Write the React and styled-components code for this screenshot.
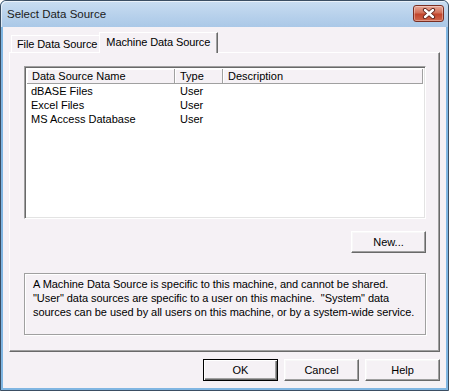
import React from "react";
import styled, { createGlobalStyle } from "styled-components";

const face = "#f5f1f5";
const shadow = "#a0a0a0";
const darkShadow = "#696969";

const GlobalStyle = createGlobalStyle`
  html, body {
    margin: 0;
    padding: 0;
    background: #ffffff;
  }
  body {
    font-family: "Liberation Sans", Arial, sans-serif;
    font-size: 11px;
    color: #000;
  }
`;

const Window = styled.div`
  width: 449px;
  height: 391px;
  box-sizing: border-box;
  border: 1px solid #3b4e63;
  border-radius: 6px 6px 0 0;
  background: #80b6e2;
  display: flex;
  flex-direction: column;
  overflow: hidden;
`;

const TitleBar = styled.div`
  height: 26px;
  flex: none;
  display: flex;
  justify-content: space-between;
  align-items: flex-start;
  background: linear-gradient(#c9ddf1, #b6d0eb 60%, #aac8e7);
  box-shadow: inset 1px 1px 0 rgba(255, 255, 255, 0.6);
  border-radius: 5px 5px 0 0;
`;

const Title = styled.span`
  font-size: 11.5px;
  line-height: 27px;
  padding-left: 6px;
  color: #1b1b1b;
`;

const CloseButton = styled.div`
  width: 29px;
  height: 15px;
  margin: 4px 4px 0 0;
  border: 1px solid #7a2e22;
  border-radius: 3px;
  background: linear-gradient(#e8a898, #d27058 45%, #c2452c 55%, #d0674d);
  box-shadow: inset 0 0 0 1px rgba(255, 255, 255, 0.35);
  display: flex;
  align-items: center;
  justify-content: center;
`;

const Client = styled.div`
  flex: 1;
  margin: 0 2px 2px 2px;
  background: ${face};
  padding: 5px 6px 0 6px;
  display: flex;
  flex-direction: column;
`;

const TabStrip = styled.div`
  height: 20px;
  display: flex;
  align-items: flex-end;
  padding-left: 2px;
  position: relative;
  z-index: 1;
`;

const Tab = styled.div`
  box-sizing: border-box;
  height: ${(p) => (p.$active ? "21px" : "17px")};
  margin-bottom: ${(p) => (p.$active ? "-1px" : "0")};
  margin-left: ${(p) => (p.$active ? "-2px" : "0")};
  padding: ${(p) => (p.$active ? "0 7px 0 6px" : "0 3px 0 5px")};
  line-height: ${(p) => (p.$active ? "18px" : "17px")};
  letter-spacing: -0.1px;
  background: ${face};
  border-top: 1px solid #ffffff;
  border-left: 1px solid #ffffff;
  border-right: 1px solid ${darkShadow};
  box-shadow: inset -1px 0 0 ${shadow};
  white-space: nowrap;
`;

const Panel = styled.div`
  height: 300px;
  box-sizing: border-box;
  border: 1px solid;
  border-color: #ffffff ${darkShadow} ${darkShadow} #ffffff;
  box-shadow: inset -1px -1px 0 ${shadow};
  padding: 13px 13px 0 14px;
  display: flex;
  flex-direction: column;
`;

const ListView = styled.div`
  height: 153px;
  box-sizing: border-box;
  border: 1px solid;
  border-color: ${shadow} #ffffff #ffffff ${shadow};
  box-shadow: inset 1px 1px 0 ${darkShadow}, inset -1px -1px 0 #e3e3e3;
  background: #ffffff;
  padding: 2px;
`;

const HeaderRow = styled.div`
  display: flex;
  height: 15px;
`;

const HeaderCell = styled.div`
  box-sizing: border-box;
  width: ${(p) => p.$w}px;
  flex: none;
  height: 15px;
  line-height: 14px;
  padding-left: 5px;
  background: ${face};
  border-right: 1px solid ${shadow};
  border-bottom: 1px solid ${shadow};
  box-shadow: inset 1px 1px 0 #ffffff;
  white-space: nowrap;
`;

const Row = styled.div`
  display: flex;
  height: 14px;
  line-height: 14px;
`;

const Cell = styled.div`
  width: ${(p) => p.$w}px;
  flex: none;
  box-sizing: border-box;
  padding-left: ${(p) => (p.$first ? "4px" : "5px")};
  white-space: nowrap;
`;

const ButtonRow = styled.div`
  display: flex;
  justify-content: flex-end;
  gap: 6px;
  margin-top: ${(p) => p.$top || 0}px;
`;

const Button = styled.div`
  width: 75px;
  height: 22px;
  box-sizing: border-box;
  border: 1px solid;
  border-color: #ffffff ${darkShadow} ${darkShadow} #ffffff;
  box-shadow: inset -1px -1px 0 ${shadow}, inset 1px 1px 0 #f8f8f8;
  background: ${face};
  display: flex;
  align-items: center;
  justify-content: center;
  ${(p) =>
    p.$default &&
    `
    border: 1px solid #000;
    box-shadow: inset 1px 1px 0 #ffffff, inset -1px -1px 0 ${darkShadow}, inset -2px -2px 0 ${shadow};
  `}
`;

const InfoBox = styled.div`
  margin-top: 20px;
  height: 62px;
  box-sizing: border-box;
  border: 1px solid ${shadow};
  box-shadow: 1px 1px 0 #ffffff, inset 1px 1px 0 #ffffff;
  padding: 3px 0 0 8px;
  line-height: 14px;
  letter-spacing: -0.05px;
  white-space: pre;
`;

const Footer = styled.div`
  padding-top: 7px;
`;

const columns = [148, 48, 200];

const rows = [
  ["dBASE Files", "User", ""],
  ["Excel Files", "User", ""],
  ["MS Access Database", "User", ""],
];

export default function App() {
  return (
    <>
      <GlobalStyle />
      <Window>
        <TitleBar>
          <Title>Select Data Source</Title>
          <CloseButton>
            <svg width="14" height="11" viewBox="0 0 14 11">
              <path d="M3 2 L11 9 M11 2 L3 9" stroke="#5a2018" strokeWidth="4.2" strokeLinecap="round" />
              <path d="M3 2 L11 9 M11 2 L3 9" stroke="#ffffff" strokeWidth="2.4" strokeLinecap="round" />
            </svg>
          </CloseButton>
        </TitleBar>
        <Client>
          <TabStrip>
            <Tab>File Data Source</Tab>
            <Tab $active>Machine Data Source</Tab>
          </TabStrip>
          <Panel>
            <ListView>
              <HeaderRow>
                <HeaderCell $w={columns[0]}>Data Source Name</HeaderCell>
                <HeaderCell $w={columns[1]}>Type</HeaderCell>
                <HeaderCell $w={columns[2]}>Description</HeaderCell>
              </HeaderRow>
              {rows.map((r) => (
                <Row key={r[0]}>
                  <Cell $w={columns[0]} $first>{r[0]}</Cell>
                  <Cell $w={columns[1]}>{r[1]}</Cell>
                  <Cell $w={columns[2]}>{r[2]}</Cell>
                </Row>
              ))}
            </ListView>
            <ButtonRow $top={12}>
              <Button>New...</Button>
            </ButtonRow>
            <InfoBox>
              {"A Machine Data Source is specific to this machine, and cannot be shared.\n\"User\" data sources are specific to a user on this machine.  \"System\" data\nsources can be used by all users on this machine, or by a system-wide service."}
            </InfoBox>
          </Panel>
          <Footer>
            <ButtonRow>
              <Button $default>OK</Button>
              <Button>Cancel</Button>
              <Button>Help</Button>
            </ButtonRow>
          </Footer>
        </Client>
      </Window>
    </>
  );
}
